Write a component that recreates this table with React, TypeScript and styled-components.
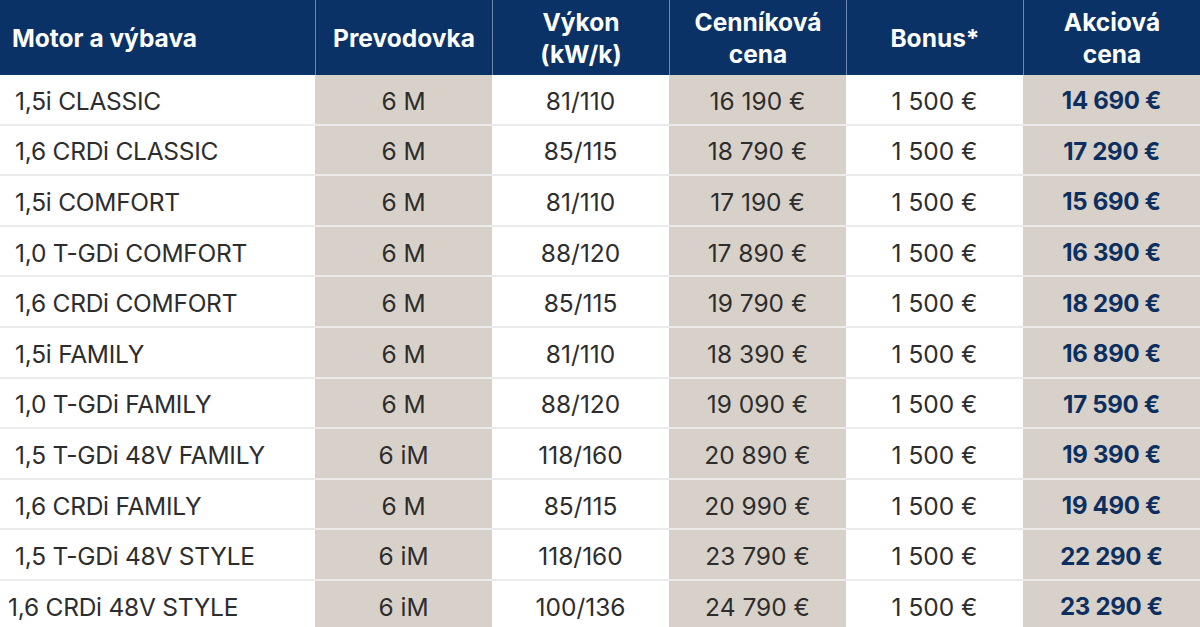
import React from 'react'
import styled, { createGlobalStyle } from 'styled-components'

const GlobalStyle = createGlobalStyle`
  html, body {
    margin: 0;
    padding: 0;
    background: #ffffff;
    overflow: hidden;
  }
  body {
    font-family: Inter, 'Open Sans', Arial, sans-serif;
  }
`

const NAVY = '#0b3266'
const BEIGE = '#d8d1ca'

const COLS = '315px 177px 177px 177px 177px 177px'

const Table = styled.div`
  width: 1200px;
  height: 627px;
  overflow: hidden;
  display: flex;
  flex-direction: column;
`

const HeadRow = styled.div`
  display: grid;
  grid-template-columns: ${COLS};
  height: 75px;
  background: ${NAVY};
  flex-shrink: 0;
`

const HeadCell = styled.div<{ left?: boolean }>`
  display: flex;
  align-items: center;
  justify-content: ${({ left }) => (left ? 'flex-start' : 'center')};
  text-align: ${({ left }) => (left ? 'left' : 'center')};
  padding-left: ${({ left }) => (left ? '12px' : '0')};
  color: #ffffff;
  font-weight: 700;
  font-size: 24.5px;
  line-height: 32px;
  border-left: 1px solid #6f88ad;
  &:first-child {
    border-left: none;
  }
`

const Row = styled.div`
  display: grid;
  grid-template-columns: ${COLS};
  height: 50.6px;
  flex-shrink: 0;
  border-bottom: 2px solid #ebebeb;
  box-sizing: border-box;
`

const Cell = styled.div<{ shaded?: boolean; strong?: boolean }>`
  display: flex;
  align-items: center;
  justify-content: center;
  padding-top: 3px;
  background: ${({ shaded }) => (shaded ? BEIGE : '#ffffff')};
  color: ${({ strong }) => (strong ? '#0d2f60' : '#2d2d2d')};
  font-weight: ${({ strong }) => (strong ? 700 : 400)};
  font-size: ${({ strong }) => (strong ? '24px' : '24.5px')};
  letter-spacing: ${({ strong }) => (strong ? '-0.3px' : '0')};
  white-space: nowrap;
`

const NameCell = styled(Cell)<{ indent: number }>`
  justify-content: flex-start;
  padding-left: ${({ indent }) => indent}px;
  letter-spacing: -0.25px;
`

type Item = { name: string; gear: string; power: string; list: string; sale: string }

const rows: Item[] = [
  { name: '1,5i CLASSIC', gear: '6 M', power: '81/110', list: '16 190 €', sale: '14 690 €' },
  { name: '1,6 CRDi CLASSIC', gear: '6 M', power: '85/115', list: '18 790 €', sale: '17 290 €' },
  { name: '1,5i COMFORT', gear: '6 M', power: '81/110', list: '17 190 €', sale: '15 690 €' },
  { name: '1,0 T-GDi COMFORT', gear: '6 M', power: '88/120', list: '17 890 €', sale: '16 390 €' },
  { name: '1,6 CRDi COMFORT', gear: '6 M', power: '85/115', list: '19 790 €', sale: '18 290 €' },
  { name: '1,5i FAMILY', gear: '6 M', power: '81/110', list: '18 390 €', sale: '16 890 €' },
  { name: '1,0 T-GDi FAMILY', gear: '6 M', power: '88/120', list: '19 090 €', sale: '17 590 €' },
  { name: '1,5 T-GDi 48V FAMILY', gear: '6 iM', power: '118/160', list: '20 890 €', sale: '19 390 €' },
  { name: '1,6 CRDi FAMILY', gear: '6 M', power: '85/115', list: '20 990 €', sale: '19 490 €' },
  { name: '1,5 T-GDi 48V STYLE', gear: '6 iM', power: '118/160', list: '23 790 €', sale: '22 290 €' },
  { name: '1,6 CRDi 48V STYLE', gear: '6 iM', power: '100/136', list: '24 790 €', sale: '23 290 €' },
]

export default function App() {
  return (
    <>
      <GlobalStyle />
      <Table>
        <HeadRow>
          <HeadCell left>Motor a výbava</HeadCell>
          <HeadCell>Prevodovka</HeadCell>
          <HeadCell>
            Výkon
            <br />
            (kW/k)
          </HeadCell>
          <HeadCell>
            Cenníková
            <br />
            cena
          </HeadCell>
          <HeadCell>Bonus*</HeadCell>
          <HeadCell>
            Akciová
            <br />
            cena
          </HeadCell>
        </HeadRow>
        {rows.map((r, i) => (
          <Row key={r.name}>
            <NameCell indent={i === rows.length - 1 ? 8 : 15}>{r.name}</NameCell>
            <Cell shaded>{r.gear}</Cell>
            <Cell>{r.power}</Cell>
            <Cell shaded>{r.list}</Cell>
            <Cell>1 500 €</Cell>
            <Cell shaded strong>
              {r.sale}
            </Cell>
          </Row>
        ))}
      </Table>
    </>
  )
}
